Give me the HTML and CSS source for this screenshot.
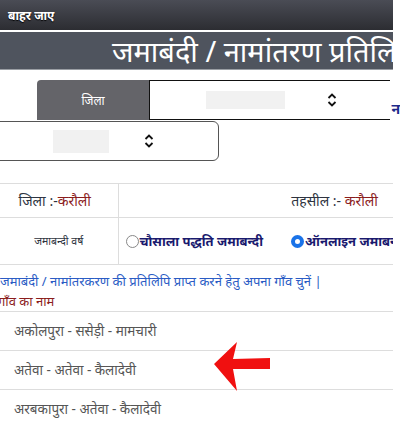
FILE: index.html
```html
<!DOCTYPE html>
<html lang="hi">
<head>
  <meta charset="UTF-8">
  <meta name="viewport" content="width=device-width, initial-scale=1.0">
  <title>जमाबंदी / नामांतरण प्रतिलिपि</title>
  <link rel="stylesheet" href="styles.css">
</head>
<body>
  <div class="page">
    <div class="topbar"><span>बाहर जाए</span></div>
    <div class="titlebar"><h1>जमाबंदी / नामांतरण प्रतिलिपि</h1></div>

    <div class="filter-row">
      <div class="label-box">जिला</div>
      <div class="select-box wide">
        <span class="ph ph-wide"></span>
        <svg class="chev" width="10" height="14" viewBox="0 0 10 14"><path d="M1.5 5 L5 1.5 L8.5 5 M1.5 9 L5 12.5 L8.5 9" fill="none" stroke="#111" stroke-width="1.8"/></svg>
      </div>
      <span class="edge-text">न</span>
    </div>

    <div class="filter-row2">
      <div class="select-box narrow">
        <span class="ph ph-narrow"></span>
        <svg class="chev" width="10" height="14" viewBox="0 0 10 14"><path d="M1.5 5 L5 1.5 L8.5 5 M1.5 9 L5 12.5 L8.5 9" fill="none" stroke="#111" stroke-width="1.8"/></svg>
      </div>
    </div>

    <table class="info">
      <colgroup><col class="col-left"><col></colgroup>
      <tr class="row1">
        <td class="left">जिला :-<span class="red">करौली</span></td>
        <td class="right">तहसील :- <span class="red">करौली</span></td>
      </tr>
      <tr class="row2">
        <td class="left small">जमाबन्दी वर्ष</td>
        <td>
          <div class="radios">
            <label><span class="radio"></span>चौसाला पद्धति जमाबन्दी</label>
            <label><span class="radio checked"></span>ऑनलाइन जमाबन्दी</label>
          </div>
        </td>
      </tr>
    </table>

    <p class="hint">जमाबंदी / नामांतरकरण की प्रतिलिपि प्राप्त करने हेतु अपना गाँव चुनें |</p>
    <p class="village-head">गाँव का नाम</p>

    <ul class="villages">
      <li>अकोलपुरा - ससेड़ी - मामचारी</li>
      <li>अतेवा - अतेवा - कैलादेवी</li>
      <li>अरबकापुरा - अतेवा - कैलादेवी</li>
    </ul>

    <svg class="arrow" width="60" height="52" viewBox="0 0 60 52"><path d="M0 23 L23 1 L19 18 L56 17 L56 28 L19 28 L23 50 Z" fill="#f01010"/></svg>
  </div>
</body>
</html>
```

FILE: styles.css
```css
body {
  margin: 0;
  font-family: "Noto Sans", "DejaVu Sans", sans-serif;
  background: white;
  overflow: hidden;
}
.page {
  position: relative;
  width: 400px;
  height: 426px;
  overflow: hidden;
}
.topbar {
  width: 393px;
  height: 30px;
  background: linear-gradient(#4a4c55, #2c2d32);
  color: white;
  font-size: 12px;
  font-weight: bold;
  display: flex;
  align-items: center;
  padding-left: 8px;
  box-sizing: border-box;
  text-shadow: 0 1px 1px #000;
}
.titlebar {
  margin-top: 2px;
  width: 393px;
  height: 37px;
  background: #4f545e;
  border-bottom: 1px solid #9a9ea4;
  overflow: hidden;
}
.titlebar h1 {
  margin: 0;
  padding-left: 112px;
  color: white;
  font-size: 29px;
  font-weight: normal;
  line-height: 38px;
  white-space: nowrap;
}
.filter-row {
  margin-top: 10px;
  display: flex;
  align-items: stretch;
  height: 40px;
}
.label-box {
  margin-left: 37px;
  width: 113px;
  background: #646469;
  border-radius: 4px 0 0 0;
  color: white;
  font-size: 12px;
  display: flex;
  align-items: center;
  justify-content: center;
}
.select-box {
  display: flex;
  align-items: center;
  box-sizing: border-box;
  background: white;
}
.select-box.wide {
  width: 243px;
  border: 1px solid #111;
  border-right: none;
  padding-left: 56px;
}
.ph {
  background: #f1f1f1;
  height: 18px;
}
.ph-wide { width: 79px; margin-right: 42px; }
.ph-narrow { width: 56px; height: 23px; margin-right: 35px; }
.edge-text {
  color: #1c2a8a;
  font-weight: bold;
  font-size: 14px;
  margin-left: 1px;
  align-self: flex-end;
  margin-bottom: 2px;
}
.filter-row2 {
  margin-top: 1px;
}
.select-box.narrow {
  margin-left: -10px;
  width: 229px;
  height: 40px;
  border: 1px solid #555;
  border-radius: 6px;
  padding-left: 62px;
}
.info {
  margin-top: 22px;
  width: 393px;
  table-layout: fixed;
  border-collapse: collapse;
  border-top: 1px solid #ddd;
  border-bottom: 1px solid #ddd;
}
.col-left { width: 118px; }
.info td {
  padding: 0;
  border-top: 1px solid #ddd;
  color: #2d3340;
  font-size: 14px;
}
.info .left {
  border-right: 1px solid #ddd;
  text-align: center;
}
.row1 td { height: 33px; }
.row1 .left { padding-right: 8px; }
.row2 td { height: 46px; }
.info .right {
  text-align: right;
  padding-right: 15px;
}
.red { color: #8b1d1d; }
.info .small { font-size: 10.5px; }
.radios {
  white-space: nowrap;
  overflow: hidden;
  padding-left: 7px;
  display: flex;
  align-items: center;
}
.radios label {
  color: #1a1a6e;
  font-weight: bold;
  font-size: 13px;
  margin-right: 28px;
  display: inline-flex;
  align-items: center;
}
.radio {
  width: 11px;
  height: 11px;
  border: 1px solid #888;
  border-radius: 50%;
  margin-right: 1px;
  flex: none;
}
.radio.checked {
  border: 4px solid #1a73e8;
  width: 5px;
  height: 5px;
  background: white;
}
.hint {
  margin: 6px 0 0;
  line-height: 20px;
  color: #2a5bc4;
  font-size: 13px;
  white-space: nowrap;
}
.village-head {
  margin: 0 0 0 -2px;
  line-height: 20px;
  color: #8b1d1d;
  font-size: 13px;
  width: 395px;
  border-bottom: 1px solid #ddd;
}
.villages {
  list-style: none;
  margin: 0;
  padding: 0;
  width: 393px;
}
.villages li {
  height: 38px;
  line-height: 38px;
  padding-left: 14px;
  color: #555;
  font-size: 13.5px;
  border-bottom: 1px solid #ddd;
}
.arrow {
  position: absolute;
  left: 214px;
  top: 341px;
}
```
